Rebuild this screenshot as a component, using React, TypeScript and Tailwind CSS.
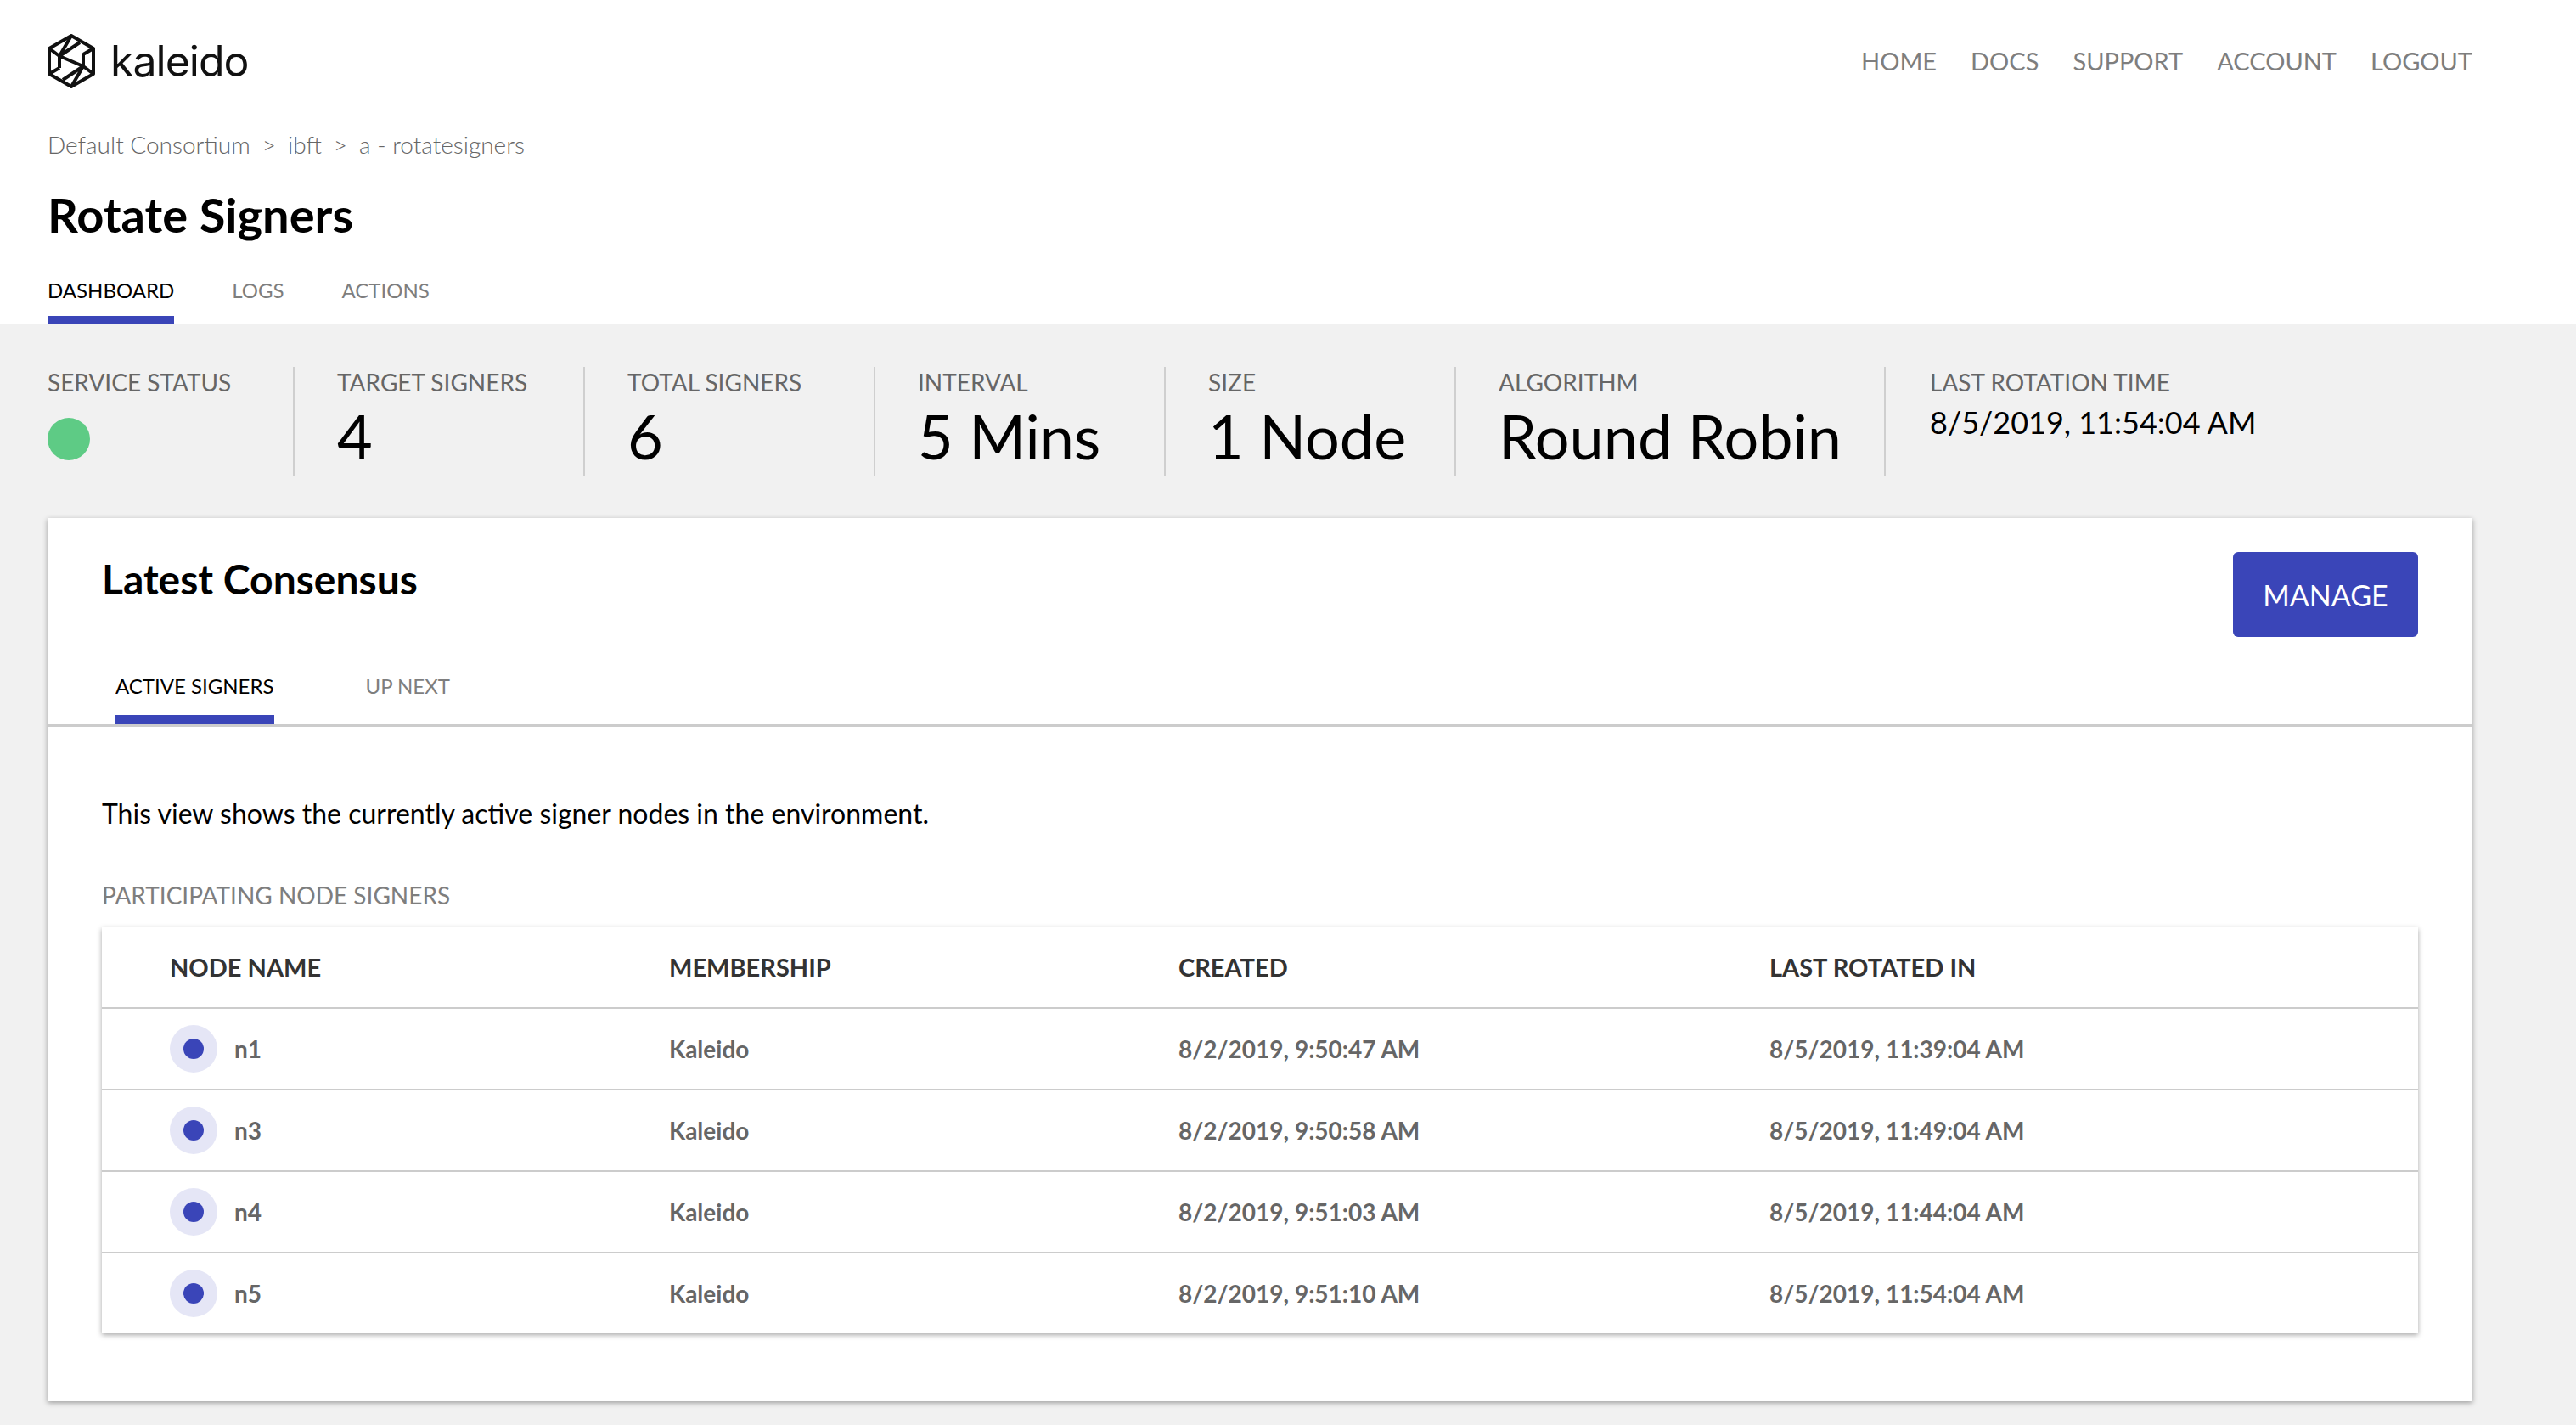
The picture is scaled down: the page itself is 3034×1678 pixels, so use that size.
const signers = [
  { name: "n1", created: "8/2/2019, 9:50:47 AM", rotated: "8/5/2019, 11:39:04 AM" },
  { name: "n3", created: "8/2/2019, 9:50:58 AM", rotated: "8/5/2019, 11:49:04 AM" },
  { name: "n4", created: "8/2/2019, 9:51:03 AM", rotated: "8/5/2019, 11:44:04 AM" },
  { name: "n5", created: "8/2/2019, 9:51:10 AM", rotated: "8/5/2019, 11:54:04 AM" },
];

const stats = [
  { label: "TARGET SIGNERS", value: "4" },
  { label: "TOTAL SIGNERS", value: "6" },
  { label: "INTERVAL", value: "5 Mins" },
  { label: "SIZE", value: "1 Node" },
  { label: "ALGORITHM", value: "Round Robin" },
];

function Logo() {
  return (
    <svg viewBox="0 0 56 64" className="h-[64px] w-[56px]" fill="none" stroke="#111" strokeWidth="4" strokeLinejoin="round">
      <path d="M28 2 L54 17 V47 L28 62 L2 47 V17 Z" />
      <path d="M28 2 L14 26 L42 38 L28 62" />
      <path d="M2 17 L14 26 V40 M54 47 L42 38 V24 M14 26 L38 10 M42 38 L18 54 M2 47 L14 40 M54 17 L42 24" />
    </svg>
  );
}

export default function App() {
  return (
    <div className="min-h-[1678px] bg-[#f1f1f1] font-['Lato',sans-serif]">
      <div className="bg-white h-[382px] pl-[56px] pr-[122px] flex flex-col">
        <div className="flex items-center justify-between pt-[40px] h-[104px]">
          <div className="flex items-center gap-[18px]">
            <Logo />
            <span className="text-[50px] font-['Inter',sans-serif] text-[#111] tracking-[-1px] leading-none">kaleido</span>
          </div>
          <nav className="flex gap-[40px] text-[29px] text-[#7e7e7e]">
            <span>HOME</span>
            <span>DOCS</span>
            <span>SUPPORT</span>
            <span>ACCOUNT</span>
            <span>LOGOUT</span>
          </nav>
        </div>
        <div className="mt-[46px] text-[28px] font-light text-[#666] leading-[40px]">
          Default Consortium<span className="ml-[14px] mr-[14px]">&gt;</span>ibft<span className="ml-[14px] mr-[14px]">&gt;</span>a - rotatesigners
        </div>
        <h1 className="mt-[28px] text-[56px] font-bold text-black leading-[70px]">Rotate Signers</h1>
        <div className="mt-auto flex gap-[68px] text-[24px]">
          <div className="text-black border-b-[10px] border-[#3a45b8] pb-[12px]">DASHBOARD</div>
          <div className="text-[#7e7e7e]">LOGS</div>
          <div className="text-[#7e7e7e]">ACTIONS</div>
        </div>
      </div>

      <div className="flex pl-[56px] pt-[50px] h-[228px]">
        <div className="w-[291px] h-[128px] border-r-2 border-[#cfcfcf]">
          <div className="text-[28px] text-[#666] leading-[36px]">SERVICE STATUS</div>
          <div className="mt-[24px] w-[50px] h-[50px] rounded-full bg-[#5ecb85]" />
        </div>
        {stats.map((s) => (
          <div key={s.label} className="h-[128px] pl-[50px] pr-[50px] min-w-[342px] border-r-2 border-[#cfcfcf] whitespace-nowrap">
            <div className="text-[28px] text-[#666] leading-[36px]">{s.label}</div>
            <div className="text-[72px] text-black leading-[90px]">{s.value}</div>
          </div>
        ))}
        <div className="h-[128px] pl-[52px] whitespace-nowrap">
          <div className="text-[28px] text-[#666] leading-[36px]">LAST ROTATION TIME</div>
          <div className="mt-[4px] text-[36px] text-black leading-[50px]">8/5/2019, 11:54:04 AM</div>
        </div>
      </div>

      <div className="ml-[56px] w-[2856px] h-[1040px] bg-white shadow-[0_2px_6px_rgba(0,0,0,0.35)] flex flex-col">
        <div className="flex justify-between pl-[64px] pr-[64px] pt-[40px] h-[180px]">
          <h2 className="text-[48px] font-bold text-black leading-[64px]">Latest Consensus</h2>
          <button className="w-[218px] h-[100px] rounded-[6px] bg-[#3a45b8] text-white text-[34px]">MANAGE</button>
        </div>
        <div className="flex gap-[108px] pl-[80px] h-[62px] border-b-4 border-[#cccccc] text-[24px] box-content">
          <div className="text-black border-b-[10px] border-[#3a45b8] h-[62px]">ACTIVE SIGNERS</div>
          <div className="text-[#7e7e7e]">UP NEXT</div>
        </div>
        <div className="px-[64px]">
          <p className="mt-[80px] text-[32px] text-black leading-[44px]">This view shows the currently active signer nodes in the environment.</p>
          <div className="mt-[54px] text-[28px] text-[#7e7e7e] leading-[40px]">PARTICIPATING NODE SIGNERS</div>
          <div className="mt-[18px] bg-white shadow-[0_2px_6px_rgba(0,0,0,0.35)]">
            <div className="grid grid-cols-[80px_588px_600px_696px_1fr] h-[94px] items-center text-[29px] font-bold text-[#333]">
              <div className="col-start-2">NODE NAME</div>
              <div>MEMBERSHIP</div>
              <div>CREATED</div>
              <div>LAST ROTATED IN</div>
            </div>
            {signers.map((n) => (
              <div key={n.name} className="grid grid-cols-[80px_588px_600px_696px_1fr] h-[96px] items-center border-t-2 border-[#cccccc] text-[28px] font-bold text-[#666]">
                <div className="col-start-2 flex items-center gap-[20px]">
                  <div className="w-[56px] h-[56px] rounded-full bg-[#e5e6f6] flex items-center justify-center">
                    <div className="w-[24px] h-[24px] rounded-full bg-[#3a45b8]" />
                  </div>
                  {n.name}
                </div>
                <div>Kaleido</div>
                <div>{n.created}</div>
                <div>{n.rotated}</div>
              </div>
            ))}
          </div>
        </div>
      </div>
    </div>
  );
}
